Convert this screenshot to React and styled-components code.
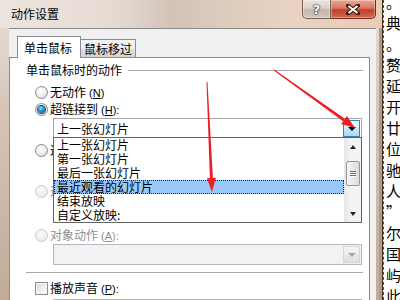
import styled, { createGlobalStyle } from "styled-components";

const GlobalStyle = createGlobalStyle`
  html, body {
    margin: 0;
    padding: 0;
    background: #fff;
  }
  body {
    font-family: "Noto Sans CJK SC", "Liberation Sans", sans-serif;
    font-size: 12px;
    color: #000;
  }
`;

const Screen = styled.div`
  position: relative;
  display: flex;
  width: 400px;
  height: 300px;
  overflow: hidden;
`;

const Window = styled.div`
  width: 383px;
  flex: none;
  box-sizing: border-box;
  display: flex;
  flex-direction: column;
  background: linear-gradient(180deg, #e9e1db 0%, #d6c6b9 35%, #c2ab98 100%);
  border-right: 1px solid #3f3128;
  box-shadow: inset -3px 0 0 #b39a84;
`;

const TitleBar = styled.div`
  height: 28px;
  flex: none;
  display: flex;
  align-items: flex-start;
  padding: 0 6px 0 11px;
  background: linear-gradient(90deg, #ece4de 0%, #e6dbd3 30%, #d2c3b8 45%, #dccbbd 58%, #e9d3c2 75%, #ebcbb3 100%);
`;

const Title = styled.div`
  flex: 1;
  padding-top: 7px;
  line-height: 14px;
  font-size: 12px;
`;

const CaptionButton = styled.div`
  box-sizing: border-box;
  height: 19px;
  width: ${(p) => (p.$close ? 45 : 29)}px;
  display: flex;
  align-items: center;
  justify-content: center;
  border: 1px solid ${(p) => (p.$close ? "#6e2c20" : "#6f6159")};
  border-top: none;
  border-left: ${(p) => (p.$close ? "none" : "1px solid #6f6159")};
  border-radius: ${(p) => (p.$close ? "0 0 5px 0" : "0 0 0 5px")};
  background: ${(p) =>
    p.$close
      ? "linear-gradient(180deg, #e7a896 0%, #d9765f 45%, #c2402a 55%, #d0684f 100%)"
      : "linear-gradient(180deg, #efe4dc 0%, #ddd0c6 45%, #c6b6aa 55%, #d4c6bb 100%)"};
  box-shadow: inset 0 0 0 1px rgba(255, 255, 255, 0.35);
`;

const HelpGlyph = styled.span`
  font-family: "DejaVu Sans", sans-serif;
  font-weight: bold;
  font-size: 13px;
  line-height: 13px;
  color: #fff;
  text-shadow: 0 0 1px #2e2a28, 0 0 1px #2e2a28, 0 0 2px #2e2a28;
`;

const FrameRow = styled.div`
  flex: 1;
  display: flex;
  padding: 0 6px 0 9px;
  min-height: 0;
`;

const Client = styled.div`
  flex: 1;
  display: flex;
  flex-direction: column;
  background: #f0f0f0;
  border-top: 1px solid #8d8987;
  padding-right: 6px;
`;

const TabStrip = styled.div`
  height: 28px;
  flex: none;
  display: flex;
  align-items: flex-end;
  padding-left: 8px;
  position: relative;
  z-index: 1;
`;

const Tab = styled.div`
  box-sizing: border-box;
  display: flex;
  align-items: center;
  border: 1px solid #898c95;
  border-bottom: none;
  line-height: 14px;
  ${(p) =>
    p.$active
      ? `
    width: 64px;
    height: 22px;
    margin-bottom: -1px;
    padding-left: 6px;
    background: #fff;
    position: relative;
    z-index: 2;
  `
      : `
    width: 56px;
    height: 18px;
    margin-left: -1px;
    padding-left: 3px;
    background: linear-gradient(180deg, #f4f4f4 0%, #ececec 50%, #dedede 51%, #d4d4d4 100%);
  `}
`;

const Panel = styled.div`
  flex: 1;
  background: #fff;
  border: 1px solid #898c95;
  border-bottom: none;
  padding: 5px 6px 0 16px;
  display: flex;
  flex-direction: column;
`;

const GroupHeader = styled.div`
  display: flex;
  align-items: center;
  gap: 6px;
  line-height: 14px;
  &::after {
    content: "";
    flex: 1;
    height: 1px;
    background: #a9a9a9;
  }
`;

const Options = styled.div`
  display: flex;
  flex-direction: column;
  padding-left: 9px;
`;

const OptionRow = styled.div`
  height: 17px;
  display: flex;
  align-items: center;
  gap: 2px;
  margin-top: ${(p) => p.$gap || 0}px;
  color: ${(p) => (p.$disabled ? "#8f8f8f" : "#000")};
  line-height: 14px;
`;

const RadioDot = styled.span`
  box-sizing: border-box;
  width: 13px;
  height: 13px;
  flex: none;
  border-radius: 50%;
  border: 1px solid ${(p) => (p.$disabled ? "#c9c9c9" : "#8a8a8a")};
  background: ${(p) =>
    p.$disabled
      ? "radial-gradient(circle at 40% 35%, #fbfbfb 0%, #eeeeee 60%, #e0e0e0 100%)"
      : "radial-gradient(circle at 40% 35%, #ffffff 0%, #ececec 55%, #cfcfcf 100%)"};
  display: flex;
  align-items: center;
  justify-content: center;
  &::after {
    content: "";
    display: ${(p) => (p.$checked ? "block" : "none")};
    width: 7px;
    height: 7px;
    border-radius: 50%;
    background: radial-gradient(circle at 40% 35%, #9fe0ff 0%, #2f93d6 40%, #0d4a7e 100%);
    box-shadow: 0 0 0 1px #1b4e77;
  }
`;

const CheckBox = styled.span`
  box-sizing: border-box;
  width: 13px;
  height: 13px;
  flex: none;
  border: 1px solid #8e8f8f;
  background: linear-gradient(135deg, #d8d8d8 0%, #f0f0f0 60%, #fdfdfd 100%);
  box-shadow: inset 0 0 0 1px #f4f4f4;
`;

const Label = styled.span`
  white-space: nowrap;
  u {
    text-decoration: underline;
  }
`;

const Mnemonic = styled.span`
  margin-left: 3px;
  font-family: "Liberation Sans", sans-serif;
  font-size: 11px;
`;

const Field = styled.div`
  position: relative;
  box-sizing: border-box;
  height: 21px;
  flex: none;
  margin-left: 18px;
  margin-right: 1px;
  margin-top: ${(p) => p.$gap || 0}px;
  display: flex;
  align-items: center;
  border: 1px solid ${(p) => (p.$disabled ? "#b4b8bc" : "#a3a6ad")};
  background: ${(p) => (p.$disabled ? "#f1f2f4" : "#fff")};
  z-index: ${(p) => (p.$open ? 5 : "auto")};
`;

const FieldText = styled.span`
  flex: 1;
  padding-left: 3px;
  line-height: 14px;
`;

const DropButton = styled.span`
  box-sizing: border-box;
  width: 17px;
  height: 17px;
  margin-right: 1px;
  display: flex;
  align-items: center;
  justify-content: center;
  border: 1px solid ${(p) => (p.$hot ? "#3c7fb1" : p.$disabled ? "#d4d7da" : "#c8c8c8")};
  background: ${(p) =>
    p.$hot
      ? "linear-gradient(180deg, #eaf6fd 0%, #d9f0fc 45%, #bee6fd 55%, #a7d9f5 100%)"
      : "linear-gradient(180deg, #f6f6f6 0%, #eaeaea 50%, #dedede 100%)"};
  &::after {
    content: "";
    border-left: 4px solid transparent;
    border-right: 4px solid transparent;
    border-top: 4px solid ${(p) => (p.$disabled ? "#a6a6a6" : "#000")};
    margin-top: 1px;
  }
`;

const DropList = styled.div`
  position: absolute;
  left: -1px;
  right: -1px;
  top: calc(100% - 1px);
  height: 86px;
  box-sizing: border-box;
  border: 1px solid #646464;
  background: #fff;
  display: flex;
`;

const Items = styled.div`
  flex: 1;
  display: flex;
  flex-direction: column;
`;

const Item = styled.div`
  box-sizing: border-box;
  height: 14px;
  line-height: 14px;
  padding-left: ${(p) => (p.$selected ? 2 : 3)}px;
  white-space: nowrap;
  background: ${(p) => (p.$selected ? "#99c9fb" : "transparent")};
  border: ${(p) => (p.$selected ? "1px dotted #222" : "none")};
  display: flex;
  align-items: center;
`;

const ScrollBar = styled.div`
  width: 17px;
  flex: none;
  display: flex;
  flex-direction: column;
  align-items: center;
  background: linear-gradient(90deg, #e6e6e6 0%, #f3f3f3 40%, #f3f3f3 100%);
`;

const ScrollArrow = styled.span`
  height: 17px;
  display: flex;
  align-items: center;
  justify-content: center;
  &::after {
    content: "";
    border-left: 3.5px solid transparent;
    border-right: 3.5px solid transparent;
    ${(p) => (p.$down ? "border-top: 4px solid #222;" : "border-bottom: 4px solid #222;")}
  }
`;

const Thumb = styled.span`
  box-sizing: border-box;
  width: 14px;
  height: 25px;
  margin-top: 6px;
  border: 1px solid #979797;
  border-radius: 2px;
  background: linear-gradient(90deg, #f4f4f4 0%, #e9e9e9 50%, #dadada 100%);
  display: flex;
  flex-direction: column;
  align-items: center;
  justify-content: center;
  gap: 1px;
`;

const Grip = styled.span`
  width: 6px;
  height: 1px;
  background: #6a6a6a;
  box-shadow: 0 1px 0 #fff;
`;

const Spacer = styled.span`
  flex: 1;
`;

const Separator = styled.div`
  height: 1px;
  margin-top: 7px;
  background: #a9a9a9;
  flex: none;
`;

const Doc = styled.div`
  flex: 1;
  background: #fff;
  border-left: 1px dashed #4a4a4a;
  padding-left: 2px;
  overflow: hidden;
`;

const DocLine = styled.div`
  font-family: "Noto Sans CJK SC", sans-serif;
  font-size: 15px;
  line-height: 21px;
  height: 21px;
  white-space: nowrap;
  &:first-child {
    margin-top: -9px;
  }
`;

const Overlay = styled.svg`
  position: absolute;
  left: 0;
  top: 0;
  z-index: 20;
  pointer-events: none;
`;

const listItems = [
  "上一张幻灯片",
  "第一张幻灯片",
  "最后一张幻灯片",
  "最近观看的幻灯片",
  "结束放映",
  "自定义放映:",
];

const docLines = ["。", "典", "。", "赘", "延", "开", "廿", "位", "驰", "人", "”", "尔", "国", "屿", "此"];

function Option({ type = "radio", checked, disabled, text, mn, suffix = "", gap }) {
  return (
    <OptionRow $gap={gap} $disabled={disabled}>
      {type === "radio" ? (
        <RadioDot $checked={checked} $disabled={disabled} />
      ) : (
        <CheckBox />
      )}
      <Label>
        {text}
        <Mnemonic>
          (<u>{mn}</u>){suffix}
        </Mnemonic>
      </Label>
    </OptionRow>
  );
}

export default function App() {
  return (
    <>
      <GlobalStyle />
      <Screen>
        <Window>
          <TitleBar>
            <Title>动作设置</Title>
            <CaptionButton>
              <HelpGlyph>?</HelpGlyph>
            </CaptionButton>
            <CaptionButton $close>
              <svg width="14" height="11" viewBox="0 0 14 11">
                <path d="M2 1.5 L12 9.5 M12 1.5 L2 9.5" stroke="#3a1a12" strokeWidth="4" strokeLinecap="square" />
                <path d="M2.5 2 L11.5 9 M11.5 2 L2.5 9" stroke="#fff" strokeWidth="2" />
              </svg>
            </CaptionButton>
          </TitleBar>
          <FrameRow>
            <Client>
              <TabStrip>
                <Tab $active>单击鼠标</Tab>
                <Tab>鼠标移过</Tab>
              </TabStrip>
              <Panel>
                <GroupHeader>单击鼠标时的动作</GroupHeader>
                <Options>
                  <Option text="无动作" mn="N" gap={7} />
                  <Option checked text="超链接到" mn="H" suffix=":" />
                  <Field $open>
                    <FieldText>上一张幻灯片</FieldText>
                    <DropButton $hot />
                    <DropList>
                      <Items>
                        {listItems.map((t, i) => (
                          <Item key={t} $selected={i === 3}>
                            {t}
                          </Item>
                        ))}
                      </Items>
                      <ScrollBar>
                        <ScrollArrow />
                        <Thumb>
                          <Grip />
                          <Grip />
                          <Grip />
                        </Thumb>
                        <Spacer />
                        <ScrollArrow $down />
                      </ScrollBar>
                    </DropList>
                  </Field>
                  <Option text="运行程序" mn="R" suffix=":" gap={3} />
                  <Field />
                  <Option disabled text="运行宏" mn="M" suffix=":" gap={3} />
                  <Field $disabled>
                    <FieldText />
                    <DropButton $disabled />
                  </Field>
                  <Option disabled text="对象动作" mn="A" suffix=":" gap={6} />
                  <Field $disabled>
                    <FieldText />
                    <DropButton $disabled />
                  </Field>
                </Options>
                <Separator />
                <Options>
                  <Option type="check" text="播放声音" mn="P" suffix=":" gap={7} />
                  <Field $disabled $gap={2}>
                    <FieldText />
                    <DropButton $disabled />
                  </Field>
                </Options>
              </Panel>
            </Client>
          </FrameRow>
        </Window>
        <Doc>
          {docLines.map((l, i) => (
            <DocLine key={i}>{l}</DocLine>
          ))}
        </Doc>
        <Overlay width="400" height="300" viewBox="0 0 400 300">
          <polygon points="273.7,70.4 274.3,69.6 344.9,118.8 343.1,121.2" fill="#ee1d23" />
          <polygon points="355,128 341.1,124.1 346.9,115.9" fill="#ee1d23" />
          <polygon points="206.5,82 207.5,82 212.9,177.9 209.9,178.1" fill="#ee1d23" />
          <polygon points="212,192 206.9,178.2 215.9,177.8" fill="#ee1d23" />
        </Overlay>
      </Screen>
    </>
  );
}
